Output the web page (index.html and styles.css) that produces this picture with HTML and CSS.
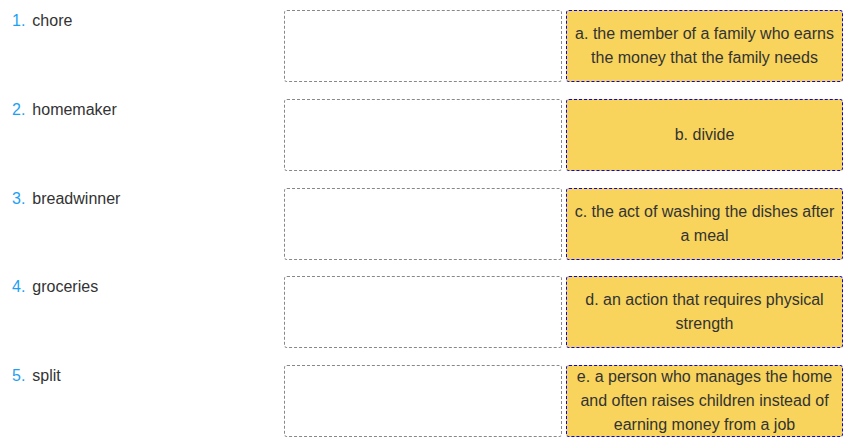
FILE: index.html
```html
<!DOCTYPE html>
<html lang="en">
<head>
  <meta charset="UTF-8">
  <meta name="viewport" content="width=device-width, initial-scale=1.0">
  <title>Match the words</title>
  <link rel="stylesheet" href="styles.css">
</head>
<body>
<div class="exercise">
  <div class="row">
    <div class="word"><span class="num">1.</span>chore</div>
    <div class="drop"></div>
    <div class="answer">a. the member of a family who earns the money that the family needs</div>
  </div>
  <div class="row">
    <div class="word"><span class="num">2.</span>homemaker</div>
    <div class="drop"></div>
    <div class="answer">b. divide</div>
  </div>
  <div class="row">
    <div class="word"><span class="num">3.</span>breadwinner</div>
    <div class="drop"></div>
    <div class="answer">c. the act of washing the dishes after a meal</div>
  </div>
  <div class="row">
    <div class="word"><span class="num">4.</span>groceries</div>
    <div class="drop"></div>
    <div class="answer">d. an action that requires physical strength</div>
  </div>
  <div class="row">
    <div class="word"><span class="num">5.</span>split</div>
    <div class="drop"></div>
    <div class="answer">e. a person who manages the home and often raises children instead of earning money from a job</div>
  </div>
</div>
</body>
</html>
```

FILE: styles.css
```css
body {
  margin: 0;
  font-family: "Liberation Sans", Arial, sans-serif;
  font-size: 16px;
  line-height: 24px;
  color: #333;
  background: #fff;
}
.exercise {
  padding: 10px 0 0 12px;
  display: flex;
  flex-direction: column;
  gap: 16.75px;
}
.row {
  display: flex;
  height: 72px;
}
.word {
  width: 272px;
  flex: none;
  line-height: 22px;
}
.num {
  color: #1f9ff2;
  margin-right: 7px;
}
.drop {
  width: 278px;
  flex: none;
  box-sizing: border-box;
  border: 1px dashed #888;
  border-radius: 3px;
  margin-right: 4px;
}
.answer {
  width: 277px;
  flex: none;
  box-sizing: border-box;
  border: 1px dashed #0000ff;
  border-radius: 3px;
  background-color: #f8d45c;
  padding: 0 6px;
  display: flex;
  align-items: center;
  justify-content: center;
  text-align: center;
}
```
